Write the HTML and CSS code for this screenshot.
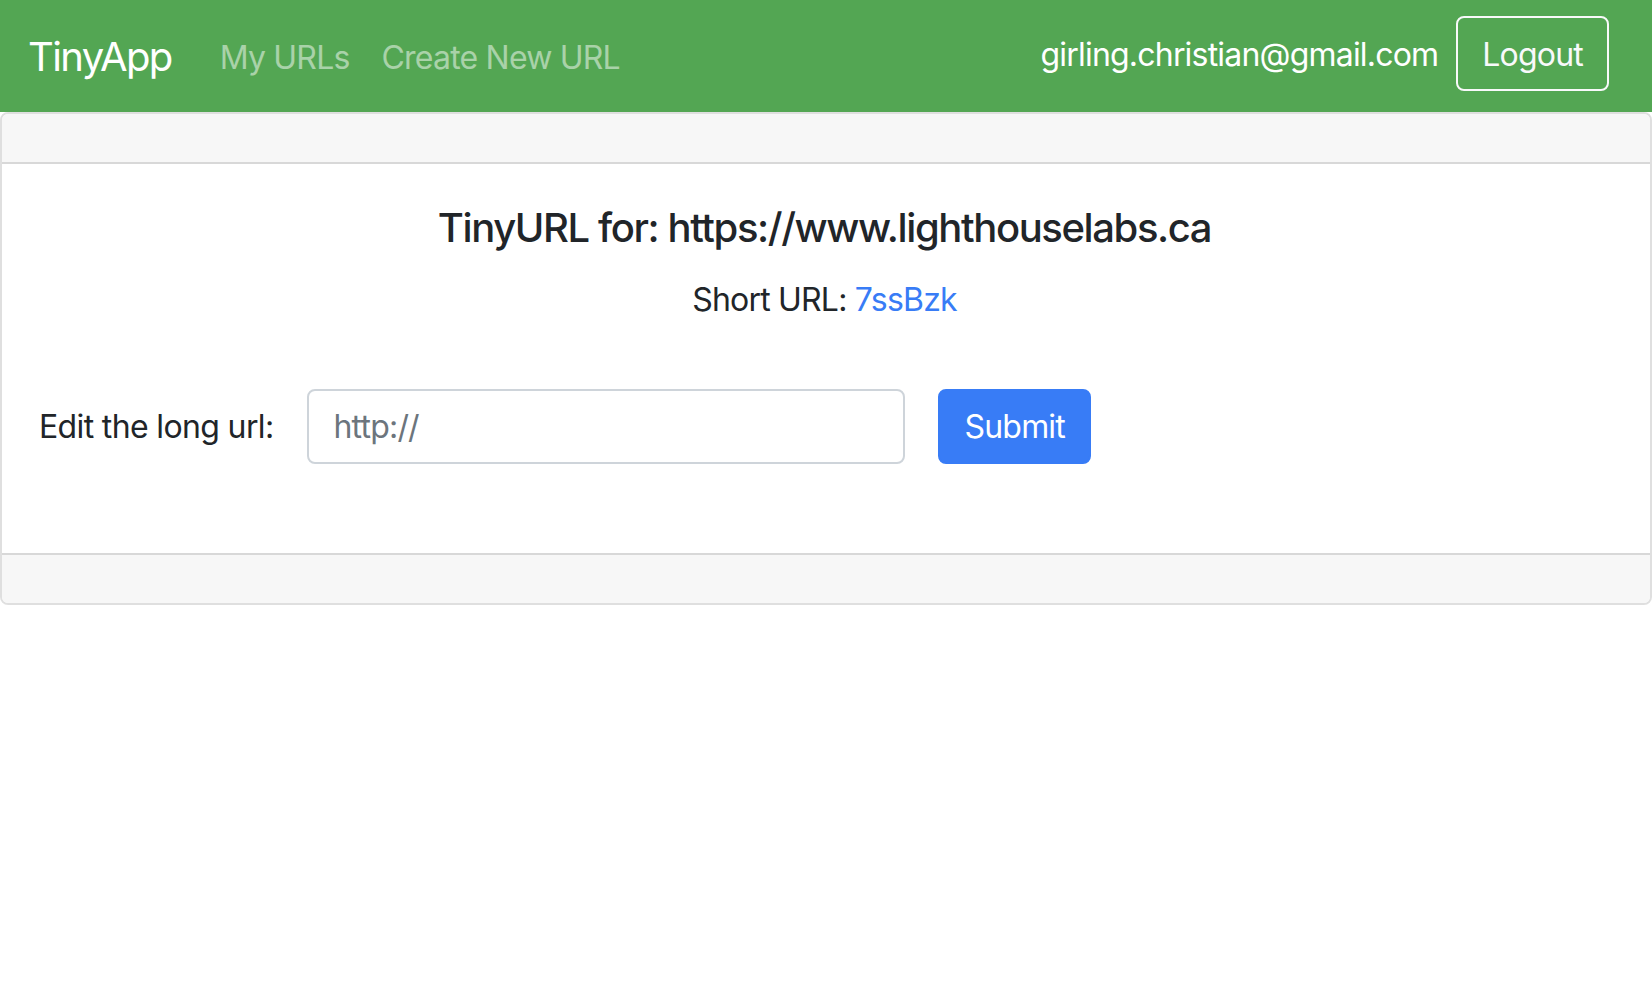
FILE: index.html
```html
<!DOCTYPE html>
<html lang="en">
<head>
<meta charset="utf-8">
<title>TinyApp</title>
<link rel="stylesheet" href="styles.css">
</head>
<body>
<nav class="navbar">
  <a class="brand" href="#">TinyApp</a>
  <ul class="nav">
    <li><a class="nav-link" href="#">My URLs</a></li>
    <li><a class="nav-link" href="#">Create New URL</a></li>
  </ul>
  <div class="nav-right">
    <span class="nav-text">girling.christian@gmail.com</span>
    <button class="btn-outline" type="button">Logout</button>
  </div>
</nav>
<div class="card">
  <div class="card-header"></div>
  <div class="card-body">
    <h5 class="card-title">TinyURL for: https://www.lighthouselabs.ca</h5>
    <p class="card-text">Short URL: <a class="link" href="#">7ssBzk</a></p>
    <form class="edit-form">
      <label class="form-label" for="longURL">Edit the long url:</label>
      <input class="form-control" id="longURL" type="text" placeholder="http://">
      <button class="btn-primary" type="submit">Submit</button>
    </form>
  </div>
  <div class="card-footer"></div>
</div>
</body>
</html>
```
FILE: styles.css
```css
* { box-sizing: border-box; }
html, body { margin: 0; padding: 0; }
body {
  font-family: Inter, "Noto Sans", "Liberation Sans", sans-serif;
  font-size: 32px;
  line-height: 1.5;
  letter-spacing: -0.025em;
  color: #212529;
  background: #fff;
}
a { text-decoration: none; }

.navbar {
  display: flex;
  align-items: flex-start;
  height: 112px;
  padding: 16px 43px 16px 28px;
  background: #53a653;
}
.brand {
  font-size: 40px;
  line-height: 60px;
  padding: 11px 0 9px;
  margin-right: 32px;
  letter-spacing: -0.04em;
  color: #fff;
}
.nav {
  display: flex;
  list-style: none;
  margin: 0;
  padding: 0;
}
.nav-link {
  display: block;
  padding: 18px 16px 14px;
  line-height: 48px;
  color: rgba(255, 255, 255, 0.5);
}
.nav-right {
  margin-left: auto;
  display: flex;
  align-items: flex-start;
}
.nav-text {
  color: #fff;
  line-height: 48px;
  margin-top: 15px;
  margin-right: 18px;
}
.btn-outline {
  font-family: inherit;
  font-size: 32px;
  line-height: 48px;
  letter-spacing: -0.025em;
  height: 75px;
  padding: 13px 24px 11px;
  color: #f8f9fa;
  background: transparent;
  border: 2px solid #f8f9fa;
  border-radius: 8px;
}

.card {
  border: 2px solid rgba(0, 0, 0, 0.125);
  border-radius: 8px;
}
.card-header {
  height: 50px;
  background: #f7f7f7;
  border-bottom: 2px solid rgba(0, 0, 0, 0.125);
  border-radius: 6px 6px 0 0;
}
.card-body {
  padding: 40px 40px 40px 37px;
  text-align: center;
}
.card-title {
  font-size: 40px;
  font-weight: 500;
  line-height: 48px;
  letter-spacing: -0.035em;
  margin: 0 0 24px;
}
.card-text {
  margin: 0 0 32px;
  line-height: 48px;
}
.link { color: #387cf6; }
.edit-form {
  display: flex;
  align-items: center;
  margin: 65px 0 49px;
  text-align: left;
}
.form-label {
  margin-right: 34px;
  line-height: 48px;
  letter-spacing: -0.02em;
}
.form-control {
  width: 598px;
  height: 75px;
  padding: 12px 24px;
  font-family: inherit;
  font-size: 32px;
  line-height: 48px;
  letter-spacing: -0.025em;
  color: #495057;
  border: 2px solid #ced4da;
  border-radius: 8px;
  background: #fff;
  margin-right: 33px;
}
.form-control::placeholder { color: #6c757d; }
.btn-primary {
  height: 75px;
  padding: 12px 24px;
  font-family: inherit;
  font-size: 32px;
  line-height: 48px;
  letter-spacing: -0.025em;
  color: #fff;
  background: #387cf6;
  border: 2px solid #387cf6;
  border-radius: 8px;
}
.card-footer {
  height: 50px;
  background: #f7f7f7;
  border-top: 2px solid rgba(0, 0, 0, 0.125);
  border-radius: 0 0 6px 6px;
}
```
